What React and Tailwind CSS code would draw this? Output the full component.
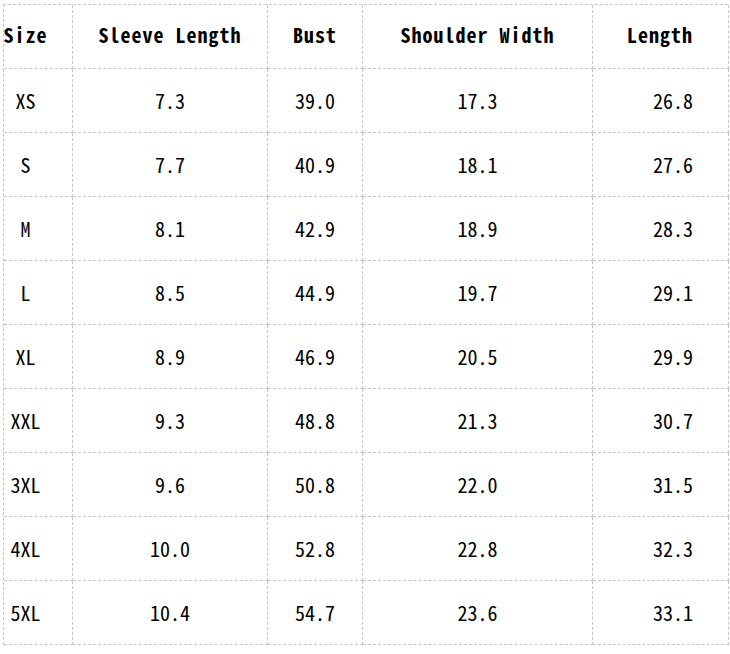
const headers = ['Size', 'Sleeve Length', 'Bust', 'Shoulder Width', 'Length'];

const rows = [
  ['XS', '7.3', '39.0', '17.3', '26.8'],
  ['S', '7.7', '40.9', '18.1', '27.6'],
  ['M', '8.1', '42.9', '18.9', '28.3'],
  ['L', '8.5', '44.9', '19.7', '29.1'],
  ['XL', '8.9', '46.9', '20.5', '29.9'],
  ['XXL', '9.3', '48.8', '21.3', '30.7'],
  ['3XL', '9.6', '50.8', '22.0', '31.5'],
  ['4XL', '10.0', '52.8', '22.8', '32.3'],
  ['5XL', '10.4', '54.7', '23.6', '33.1'],
];

// where each column's text sits inside its cell
const align = [
  'justify-center pr-[25px]',
  'justify-center',
  'justify-center',
  'justify-center',
  'justify-end pr-[35px]',
];

const cell = 'flex h-[64px] items-center border-r border-b border-dashed border-[#c6c6c6] whitespace-pre';

export default function App() {
  return (
    <div className="min-h-[654px] bg-white pt-[4px] pl-[3px]">
      <div
        className="grid w-[725px] grid-cols-[69px_195px_95px_230px_136px] border-l border-t border-dashed border-[#c6c6c6] text-black"
        style={{ fontFamily: '"Noto Sans Mono CJK SC", "DejaVu Sans Mono", monospace' }}
      >
        {headers.map((h, i) => (
          <div key={h} className={`${cell} ${align[i]} pb-[3px] text-[20px] font-bold tracking-[1px]`}>
            {h}
          </div>
        ))}
        {rows.map((r) =>
          r.map((v, i) => (
            <div key={r[0] + i} className={`${cell} ${align[i]} text-[20px]`}>
              {v}
            </div>
          ))
        )}
      </div>
    </div>
  );
}
